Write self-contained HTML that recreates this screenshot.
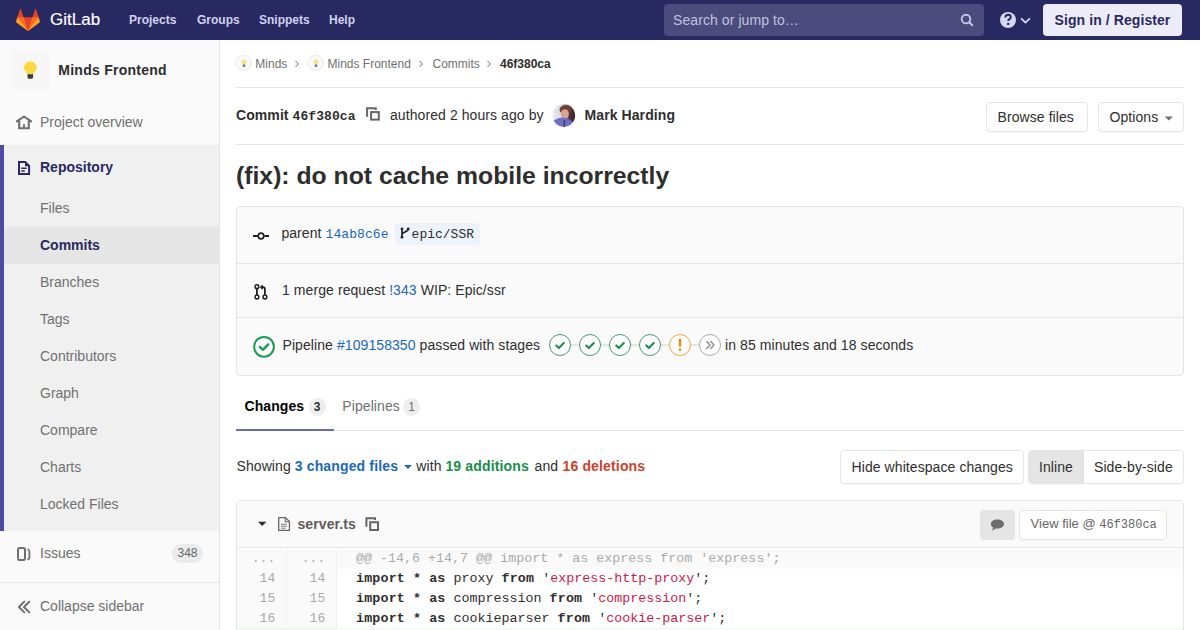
<!DOCTYPE html>
<html><head><meta charset="utf-8">
<style>
*{box-sizing:border-box;margin:0;padding:0}
html,body{width:1200px;height:630px;overflow:hidden;background:#fff;font-family:"Liberation Sans",sans-serif;font-size:14px;color:#2e2e2e}
.a{position:absolute;white-space:nowrap}
.t14{position:absolute;white-space:nowrap;font-size:14px;line-height:16px;letter-spacing:.08px}
b,.t14 b{letter-spacing:.15px}
.t12{position:absolute;white-space:nowrap;font-size:12px;line-height:14px}
.mono{font-family:"Liberation Mono",monospace}
svg{position:absolute;overflow:visible}
/* navbar */
#nav{position:absolute;left:0;top:0;width:1200px;height:40px;background:#292961}
.nl{position:absolute;top:13px;font-weight:bold;font-size:12px;line-height:14px;color:#d1d1f0;white-space:nowrap}
/* sidebar */
#side{position:absolute;left:0;top:40px;width:220px;height:590px;background:#fafafa;border-right:1px solid #e5e5e5}
.si{position:absolute;left:40px;font-size:14px;line-height:16px;color:#707070;white-space:nowrap}
.lnk{color:#1b69b6}
.btn{position:absolute;background:#fff;border:1px solid #e5e5e5;border-radius:4px;box-shadow:0 1px 1px rgba(0,0,0,.03)}
.badge{position:absolute;background:#eee;border-radius:9px;color:#2e2e2e;font-size:12px;line-height:18px;text-align:center}
.code{position:absolute;left:356px;font-family:"Liberation Mono",monospace;font-size:13.35px;line-height:20px;white-space:pre;color:#2e2e2e}
.code b{font-weight:bold}
.code .s{color:#c91b4b}
.ln{position:absolute;font-family:"Liberation Mono",monospace;font-size:13px;line-height:20px;color:#aaa;text-align:right;width:39.2px}
</style></head><body>
<div id="nav">
  <div class="a" style="left:50px;top:9.5px;font-size:17px;line-height:20px;color:#fff;-webkit-text-stroke:.15px #fff">GitLab</div>
  <div class="nl" style="left:129px">Projects</div>
  <div class="nl" style="left:197px">Groups</div>
  <div class="nl" style="left:259px">Snippets</div>
  <div class="nl" style="left:329px">Help</div>
  <div class="a" style="left:664px;top:4px;width:320px;height:32px;background:#4b4b7d;border-radius:4px"></div>
  <div class="t14" style="left:673px;top:12px;color:#c2c2de">Search or jump to…</div>
  <div class="a" style="left:1043px;top:4px;width:139px;height:32px;background:#ececf8;border-radius:4px"></div>
  <div class="t14" style="left:1043px;top:12px;width:139px;text-align:center;font-weight:bold;color:#292961">Sign in / Register</div>
</div>

<div id="side">
  <div class="a" style="left:10px;top:10px;width:40px;height:40px;border-radius:4px;background:#f7f7f7"></div>
  <div class="t14" style="left:58.3px;top:21.5px;font-weight:bold;color:#2e2e2e;letter-spacing:.25px">Minds Frontend</div>
  <div class="si" style="top:73.6px">Project overview</div>
  <div class="a" style="left:0;top:105px;width:219px;height:386px;background:#f0f0f0"></div>
  <div class="a" style="left:0;top:105px;width:4px;height:386px;background:#4b4ba3"></div>
  <div class="si" style="top:118.7px;font-weight:bold;color:#292961">Repository</div>
  <div class="si" style="top:160px">Files</div>
  <div class="a" style="left:4px;top:187px;width:215px;height:37px;background:#e6e6e6"></div>
  <div class="si" style="top:197px;font-weight:bold;color:#292961">Commits</div>
  <div class="si" style="top:234px">Branches</div>
  <div class="si" style="top:271px">Tags</div>
  <div class="si" style="top:308px">Contributors</div>
  <div class="si" style="top:345px">Graph</div>
  <div class="si" style="top:382px">Compare</div>
  <div class="si" style="top:419px">Charts</div>
  <div class="si" style="top:456px">Locked Files</div>
  <div class="si" style="top:505.4px">Issues</div>
  <div class="badge" style="left:172px;top:504px;width:31px;height:19px;color:#666;background:#ebebeb;line-height:19px">348</div>
  <div class="a" style="left:0;top:542px;width:219px;height:1px;background:#e5e5e5"></div>
  <div class="si" style="top:558px">Collapse sidebar</div>
</div>

<div id="main">
  <!-- breadcrumbs -->
  <div class="a" style="left:236px;top:55px;width:16px;height:16px;border-radius:50%;background:#f5f5f5;border:1px solid #eee"></div>
  <div class="t12" style="left:255.3px;top:56.5px;color:#707070">Minds</div>
  <div class="a" style="left:308px;top:55px;width:16px;height:16px;border-radius:50%;background:#f5f5f5;border:1px solid #eee"></div>
  <div class="t12" style="left:327.5px;top:56.5px;color:#707070">Minds Frontend</div>
  <div class="t12" style="left:432.5px;top:56.5px;color:#707070">Commits</div>
  <div class="t12" style="left:500px;top:56.5px;font-weight:bold;color:#2e2e2e">46f380ca</div>
  <div class="a" style="left:236px;top:87px;width:948px;height:1px;background:#e5e5e5"></div>

  <!-- commit header -->
  <div class="t14" style="left:236px;top:106.7px;font-weight:bold">Commit <span class="mono" style="font-size:13px">46f380ca</span></div>
  <div class="t14" style="left:390px;top:106.7px;color:#2e2e2e">authored 2 hours ago by</div>
  <div class="t14" style="left:584.6px;top:106.7px;font-weight:bold">Mark Harding</div>
  <div class="btn" style="left:986px;top:102px;width:102px;height:30px"></div>
  <div class="t14" style="left:997.5px;top:108.5px">Browse files</div>
  <div class="btn" style="left:1098px;top:102px;width:86px;height:30px"></div>
  <div class="t14" style="left:1109.5px;top:108.5px">Options</div>
  <div class="a" style="left:236px;top:144px;width:948px;height:1px;background:#e5e5e5"></div>

  <!-- title -->
  <div class="a" style="left:236px;top:161px;font-size:24.75px;line-height:30px;font-weight:bold;color:#2e2e2e">(fix): do not cache mobile incorrectly</div>

  <!-- info box -->
  <div class="a" style="left:236px;top:206px;width:948px;height:170px;background:#fafafa;border:1px solid #e5e5e5;border-radius:4px"></div>
  <div class="a" style="left:237px;top:263px;width:946px;height:1px;background:#e5e5e5"></div>
  <div class="a" style="left:237px;top:317px;width:946px;height:1px;background:#e5e5e5"></div>
  <div class="t14" style="left:281.4px;top:225px">parent <span class="mono lnk" style="font-size:13px">14ab8c6e</span></div>
  <div class="a" style="left:394.5px;top:223px;width:85px;height:21.5px;background:#edf3fa;border-radius:3px"></div>
  <div class="a mono" style="left:411.6px;top:227px;font-size:13px;line-height:16px;color:#2e2e2e">epic/SSR</div>
  <div class="t14" style="left:282px;top:281.8px">1 merge request <span class="lnk">!343</span> WIP: Epic/ssr</div>
  <div class="t14" style="left:282.5px;top:337px">Pipeline <span class="lnk">#109158350</span> passed with stages</div>
  <div class="a" style="left:570px;top:344px;width:130px;height:2px;background:#e5e5e5"></div>
  <div class="t14" style="left:725px;top:337px">in 85 minutes and 18 seconds</div>

  <!-- tabs -->
  <div class="a" style="left:236px;top:430px;width:948px;height:1px;background:#e5e5e5"></div>
  <div class="a" style="left:236px;top:429px;width:98px;height:2px;background:#6b6bb8"></div>
  <div class="t14" style="left:244.5px;top:397.8px;font-weight:bold;color:#000">Changes</div>
  <div class="badge" style="left:308.5px;top:398px;width:17px;height:18px;font-weight:bold">3</div>
  <div class="t14" style="left:342.3px;top:397.8px;color:#707070">Pipelines</div>
  <div class="badge" style="left:403px;top:398px;width:17px;height:18px;color:#707070">1</div>

  <!-- showing -->
  <div class="t14" style="left:236.5px;top:457.5px">Showing <b class="lnk">3 changed files</b></div>
  <div class="t14" style="left:416.3px;top:457.5px">with</div><div class="t14" style="left:445.4px;top:457.5px"><b style="color:#168f48">19 additions</b></div><div class="t14" style="left:534.6px;top:457.5px">and</div><div class="t14" style="left:562.5px;top:457.5px"><b style="color:#cc4129">16 deletions</b></div>
  <div class="btn" style="left:840px;top:450px;width:184px;height:34px"></div>
  <div class="t14" style="left:851.5px;top:458.7px">Hide whitespace changes</div>
  <div class="btn" style="left:1028px;top:450px;width:156px;height:34px"></div>
  <div class="a" style="left:1029px;top:451px;width:55px;height:32px;background:#e5e5e5;border-right:1px solid #e0e0e0"></div>
  <div class="t14" style="left:1039px;top:458.7px">Inline</div>
  <div class="t14" style="left:1094px;top:458.7px">Side-by-side</div>

  <!-- file -->
  <div class="a" style="left:236px;top:500px;width:948px;height:140px;background:#fff;border:1px solid #e5e5e5;border-radius:4px 4px 0 0"></div>
  <div class="a" style="left:237px;top:501px;width:946px;height:47px;background:#fafafa;border-bottom:1px solid #e5e5e5;border-radius:3px 3px 0 0"></div>
  <div class="t14" style="left:297.5px;top:516px;font-weight:bold;color:#5c5c5c">server.ts</div>
  <div class="a" style="left:980px;top:510px;width:35px;height:30px;background:#e5e5e5;border-radius:4px"></div>
  <div class="btn" style="left:1019px;top:510px;width:148px;height:30px"></div>
  <div class="a" style="left:1030.6px;top:515.5px;font-size:13px;line-height:15px;color:#666">View file @ <span class="mono" style="font-size:12px">46f380ca</span></div>

  <!-- diff -->
  <div class="a" style="left:237px;top:549px;width:946px;height:20px;background:#fafafa"></div>
  <div class="a" style="left:237px;top:569px;width:99px;height:61px;background:#fafafa"></div>
  <div class="a" style="left:286px;top:549px;width:1px;height:81px;background:#f0f0f0"></div>
  <div class="a" style="left:336px;top:549px;width:1px;height:81px;background:#f0f0f0"></div>
  <div class="a" style="left:237px;top:627px;width:946px;height:3px;background:linear-gradient(#fdfefd,#f6fcf7 50%,#eef9f1)"></div>
  <div class="a" style="left:237px;top:627px;width:99px;height:3px;background:linear-gradient(#f8fbf8,#f0f8f2 50%,#e8f6ec)"></div>
  <div class="ln" style="left:236px;top:549px">...</div>
  <div class="ln" style="left:286px;top:549px">...</div>
  <div class="ln" style="left:236px;top:569px">14</div>
  <div class="ln" style="left:286px;top:569px">14</div>
  <div class="ln" style="left:236px;top:589px">15</div>
  <div class="ln" style="left:286px;top:589px">15</div>
  <div class="ln" style="left:236px;top:609px">16</div>
  <div class="ln" style="left:286px;top:609px">16</div>
  <div class="code" style="top:549px;color:#aaa">@@ -14,6 +14,7 @@ import * as express from 'express';</div>
  <div class="code" style="top:569px"><b>import</b> <b>*</b> <b>as</b> proxy <b>from</b> '<span class="s">express-http-proxy</span>';</div>
  <div class="code" style="top:589px"><b>import</b> <b>*</b> <b>as</b> compression <b>from</b> '<span class="s">compression</span>';</div>
  <div class="code" style="top:609px"><b>import</b> <b>*</b> <b>as</b> cookieparser <b>from</b> '<span class="s">cookie-parser</span>';</div>
</div>
<!--ICONS-->
<svg style="position:absolute;left:0;top:0;overflow:visible" width="1200" height="630" viewBox="0 0 1200 630">
<defs><clipPath id="avc"><circle cx="563.8" cy="115.6" r="11.3"/></clipPath>
<linearGradient id="avg" x1="0" x2="1" y1="0" y2="0"><stop offset="0" stop-color="#efeef4"/><stop offset=".42" stop-color="#ddd6e4"/><stop offset=".68" stop-color="#5a3440"/><stop offset="1" stop-color="#2c171e"/></linearGradient>
<filter id="avb" x="-10%" y="-10%" width="120%" height="120%"><feGaussianBlur stdDeviation="0.7"/></filter></defs>
<g clip-path="url(#avc)"><g filter="url(#avb)">
<rect x="550" y="102" width="28" height="28" fill="url(#avg)"/>
<ellipse cx="565.5" cy="109.8" rx="6" ry="4.6" fill="#6a4034"/>
<ellipse cx="564.8" cy="114" rx="4" ry="4.8" fill="#d8a391"/>
<ellipse cx="562.5" cy="127" rx="11.5" ry="9.5" fill="#6d70c4"/>
<rect x="563.6" y="120" width="1.5" height="8" fill="#453a6a"/>
</g></g>
<!-- fox -->
<g transform="translate(16,8) scale(0.6667)">
<path fill="#e24329" d="M2 14l9.38 9v-9l-4-12.28c-.205-.632-1.176-.632-1.38 0z"/>
<path fill="#e24329" d="M34 14l-9.38 9v-9l4-12.28c.205-.632 1.176-.632 1.38 0z"/>
<path fill="#e24329" d="M18,34.38 3,14 33,14 Z"/>
<path fill="#fc6d26" d="M18,34.38 11.38,14 2,14 6,25Z"/>
<path fill="#fc6d26" d="M18,34.38 24.62,14 34,14 30,25Z"/>
<path fill="#fca326" d="M2 14L.1 20.16c-.18.565 0 1.2.5 1.56l17.42 12.66z"/>
<path fill="#fca326" d="M34 14l1.9 6.16c.18.565 0 1.2-.5 1.56L18 34.38z"/>
</g>
<!-- search -->
<circle cx="966" cy="19" r="4.3" fill="none" stroke="#c5c5e3" stroke-width="1.9"/>
<path d="M969.3 22.3L972.2 25.2" stroke="#c5c5e3" stroke-width="2.1" stroke-linecap="round"/>
<!-- help -->
<circle cx="1008" cy="20" r="8" fill="#d6d6f0"/>
<path d="M1005.4 17.4c0-1.6 1.1-2.6 2.7-2.6s2.7 1 2.7 2.4c0 1.9-2.6 1.9-2.6 3.7" fill="none" stroke="#292961" stroke-width="2"/>
<circle cx="1008.2" cy="23.9" r="1.2" fill="#292961"/>
<path d="M1021.6 18.8l3.9 3.8 3.9-3.8" fill="none" stroke="#d1d1f0" stroke-width="1.8" stroke-linecap="round" stroke-linejoin="round"/>
<!-- sidebar bulb -->
<path d="M30.3 61.6c-3.6 0-6.4 2.6-6.4 6 0 2.3 1.5 3.5 2.5 4.8.6.8.8 1.3.8 1.9h6.2c0-.6.2-1.1.8-1.9 1-1.3 2.5-2.5 2.5-4.8 0-3.4-2.8-6-6.4-6z" fill="#fbd741"/>
<path d="M26.8 62.5c-1.8 1-2.4 2.6-2.4 4.3" stroke="#fde98a" stroke-width="1.2" fill="none"/>
<path d="M27.5 74.2h5.6v2.8c0 1-.8 1.8-1.8 1.8h-2c-1 0-1.8-.8-1.8-1.8z" fill="#3a3a3a"/>
<!-- house -->
<path d="M16.8 121.4L24 116.5l7.2 4.9" fill="none" stroke="#6f6f6f" stroke-width="2.1" stroke-linecap="round" stroke-linejoin="round"/>
<path d="M19.2 120.2v8h9.6v-8" fill="none" stroke="#6f6f6f" stroke-width="2.1"/>
<path d="M24 124.2v4" stroke="#6f6f6f" stroke-width="2"/>
<!-- doc (repository) -->
<path d="M19 162.1h6.2l3.9 3.9v8H19z" fill="none" stroke="#292961" stroke-width="2" stroke-linejoin="miter"/>
<path d="M25 162v4.2h4.2z" fill="#292961"/>
<path d="M21.2 168.2h5.4M21.2 171h3.6" stroke="#292961" stroke-width="1.6"/>
<!-- issues -->
<rect x="18" y="548" width="7" height="12" rx="1.8" fill="none" stroke="#6f6f6f" stroke-width="2"/>
<path d="M27.5 549.3c1.3.6 1.9 1.2 1.9 1.9v6.2c0 .9-.9 1.7-1.9 2.2" fill="none" stroke="#6f6f6f" stroke-width="1.8"/>
<!-- collapse -->
<path d="M24.3 601.6L18.9 607l5.4 5.4M29.3 601.6L23.9 607l5.4 5.4" fill="none" stroke="#6f6f6f" stroke-width="2" stroke-linecap="round" stroke-linejoin="round"/>
<!-- breadcrumb avatars -->
<circle cx="243.5" cy="63" r="7.5" fill="#fafafa" stroke="#ececec" stroke-width="1"/>
<path d="M244 59.6c-1.5 0-2.6 1-2.6 2.4 0 1.2 1 1.7 1 2.4h3.2c0-.7 1-1.2 1-2.4 0-1.4-1.1-2.4-2.6-2.4z" fill="#f5e48a"/>
<rect x="242.6" y="64.6" width="2.8" height="2.3" rx=".8" fill="#777"/>
<circle cx="315.5" cy="63" r="7.5" fill="#fafafa" stroke="#ececec" stroke-width="1"/>
<path d="M316 59.6c-1.5 0-2.6 1-2.6 2.4 0 1.2 1 1.7 1 2.4h3.2c0-.7 1-1.2 1-2.4 0-1.4-1.1-2.4-2.6-2.4z" fill="#f5e48a"/>
<rect x="314.6" y="64.6" width="2.8" height="2.3" rx=".8" fill="#777"/>
<!-- breadcrumb chevrons -->
<path d="M295.5 61l2.8 2.9-2.8 2.9M419.5 61l2.8 2.9-2.8 2.9M487.5 61l2.8 2.9-2.8 2.9" fill="none" stroke="#a0a0a0" stroke-width="1.2"/>
<!-- copy icon commit -->
<path d="M375.8 110v-1.8H367.1v8.5" fill="none" stroke="#666" stroke-width="2"/>
<rect x="371.1" y="112.1" width="7.7" height="7.5" fill="none" stroke="#666" stroke-width="2"/>
<!-- options caret -->
<path d="M1164.8 116.5h8l-4 4z" fill="#707070"/>
<!-- commit icon -->
<path d="M253 236h4.6M264.6 236H269" stroke="#1f1f1f" stroke-width="1.9"/>
<circle cx="261" cy="236" r="2.8" fill="none" stroke="#1f1f1f" stroke-width="1.7"/>
<!-- branch icon -->
<path d="M402 229v8.2M408.2 229c0 3.2-6.2 2.8-6.2 5.6" fill="none" stroke="#222" stroke-width="1.7" stroke-linecap="round"/><circle cx="402" cy="229" r="1.4" fill="#222"/><circle cx="402" cy="237.2" r="1.4" fill="#222"/><circle cx="408.2" cy="229" r="1.4" fill="#222"/>
<!-- MR icon -->
<path d="M256.9 288.8v6.2M264.9 294.8v-5.6c0-1.3-.6-2-1.8-2H261.4" fill="none" stroke="#1f1f1f" stroke-width="1.8"/>
<path d="M262.3 285.2l-1.9 2 1.9 2z" fill="#1f1f1f" stroke="#1f1f1f" stroke-width="1"/>
<circle cx="256.9" cy="286.7" r="1.9" fill="#fff" stroke="#1f1f1f" stroke-width="1.5"/>
<circle cx="256.9" cy="297" r="1.9" fill="#fff" stroke="#1f1f1f" stroke-width="1.5"/>
<circle cx="264.9" cy="297" r="1.9" fill="#fff" stroke="#1f1f1f" stroke-width="1.5"/>
<!-- pipeline status -->
<circle cx="264" cy="346.8" r="9.9" fill="#fff" stroke="#1b9c52" stroke-width="2"/>
<path d="M259.8 346.9l3.1 2.9 5.3-5.4" fill="none" stroke="#1b9c52" stroke-width="2.4" stroke-linecap="round" stroke-linejoin="round"/>
<!-- stage connectors -->
<path d="M571 345.5h7M601 345.5h7M631 345.5h7M661 345.5h7M691 345.5h7" stroke="#e8e8e8" stroke-width="1.6"/>
<g fill="#fff" stroke-width="0.95">
<circle cx="560" cy="345" r="10.5" stroke="#3d9466"/>
<circle cx="590" cy="345" r="10.5" stroke="#3d9466"/>
<circle cx="620" cy="345" r="10.5" stroke="#3d9466"/>
<circle cx="650" cy="345" r="10.5" stroke="#3d9466"/>
<circle cx="680" cy="345" r="10.5" stroke="#f0a030"/>
<circle cx="710" cy="345" r="10.5" stroke="#a7a7a7"/>
</g>
<g fill="none" stroke="#1a9150" stroke-width="2.1" stroke-linecap="round" stroke-linejoin="round">
<path d="M556.2 345.4l2.6 2.5 5-5"/>
<path d="M586.2 345.4l2.6 2.5 5-5"/>
<path d="M616.2 345.4l2.6 2.5 5-5"/>
<path d="M646.2 345.4l2.6 2.5 5-5"/>
</g>
<path d="M680 339.6v6" stroke="#ee8a00" stroke-width="2.4" stroke-linecap="round"/>
<circle cx="680" cy="349.6" r="1.3" fill="#ee8a00"/>
<path d="M706.8 341.6l3.2 3.4-3.2 3.4M710.8 341.6l3.2 3.4-3.2 3.4" fill="none" stroke="#8f8f8f" stroke-width="1.5" stroke-linecap="round" stroke-linejoin="round"/>
<!-- showing caret -->
<path d="M404 465h8l-4 4z" fill="#1b69b6"/>
<!-- file header caret -->
<path d="M258 521.8h8.4l-4.2 4.3z" fill="#2e2e2e"/>
<!-- file icon -->
<path d="M278.7 517.6h6.8l3.9 3.9v8.9h-10.7z" fill="#fff" stroke="#666" stroke-width="1.3" stroke-linejoin="round"/>
<path d="M285.2 517.6v4.2h4.2" fill="none" stroke="#666" stroke-width="1.1"/>
<path d="M281 524.2h5.8M281 526.2h5.8M281 528.2h4.6" stroke="#777" stroke-width="1"/>
<!-- copy icon file -->
<path d="M375 520v-1.8H366.4v8.5" fill="none" stroke="#666" stroke-width="2"/>
<rect x="370.2" y="522.2" width="7.8" height="7.8" fill="none" stroke="#666" stroke-width="2"/>
<!-- comment bubble -->
<path d="M997.4 519.6c-3.7 0-6.6 2-6.6 4.5 0 1.4.9 2.6 2.3 3.4l-1 3.2 3.4-2.3c.6.1 1.2.2 1.9.2 3.7 0 6.6-2 6.6-4.5s-2.9-4.5-6.6-4.5z" fill="#6c6c6c"/>
</svg>
</body></html>
